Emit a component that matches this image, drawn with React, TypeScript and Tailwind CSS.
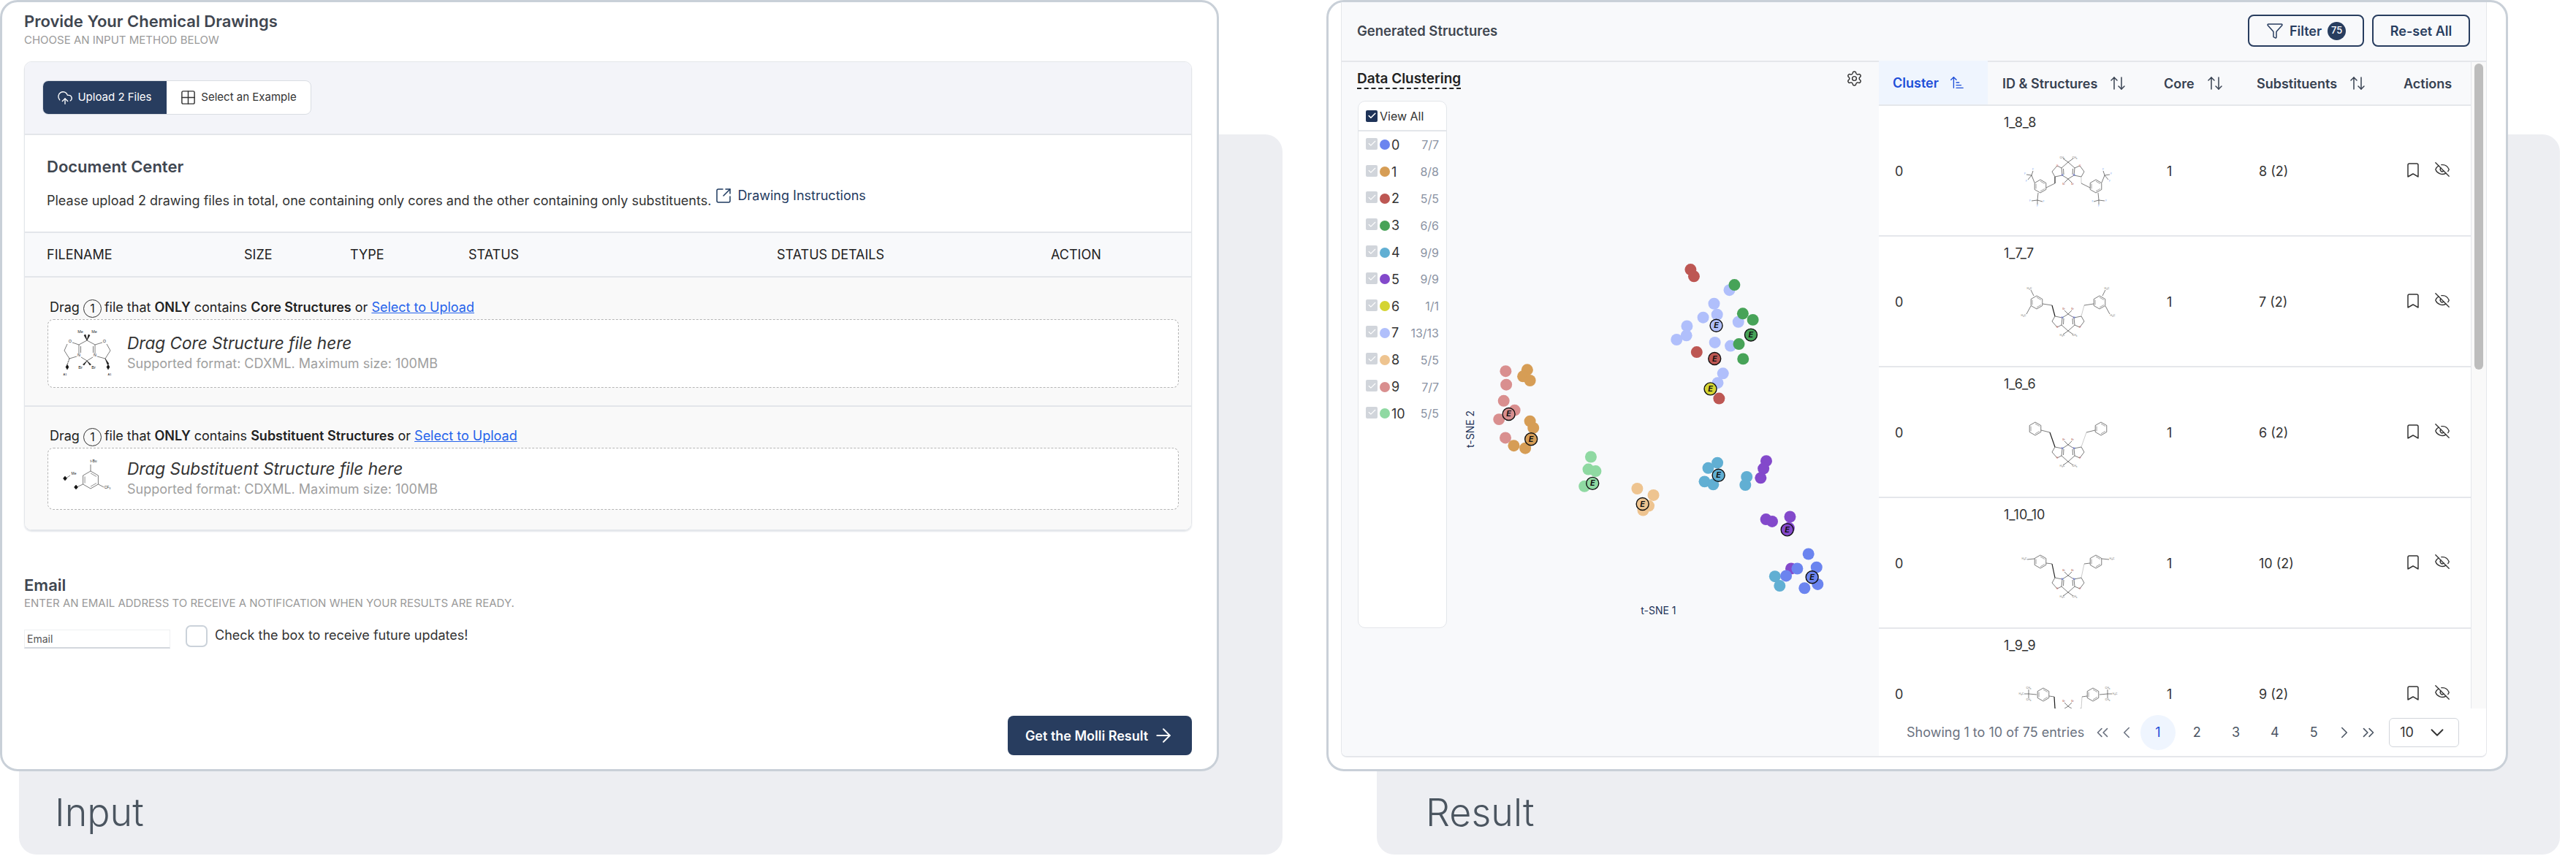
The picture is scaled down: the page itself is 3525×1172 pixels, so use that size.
import {
  ArrowRight,
  ArrowUpDown,
  ArrowUpNarrowWide,
  Bookmark,
  Check,
  ChevronDown,
  ChevronLeft,
  ChevronRight,
  ChevronsLeft,
  ChevronsRight,
  CloudUpload,
  EyeOff,
  Funnel,
  Grid2x2,
  Settings,
  SquareArrowOutUpRight,
} from 'lucide-react'

const clusters = [
  { id: 0, color: '#6b84ef', count: '7/7' },
  { id: 1, color: '#d69d55', count: '8/8' },
  { id: 2, color: '#bd5753', count: '5/5' },
  { id: 3, color: '#47a358', count: '6/6' },
  { id: 4, color: '#61afd3', count: '9/9' },
  { id: 5, color: '#8349cb', count: '9/9' },
  { id: 6, color: '#d4d432', count: '1/1' },
  { id: 7, color: '#b0bffb', count: '13/13' },
  { id: 8, color: '#eec490', count: '5/5' },
  { id: 9, color: '#d98f8f', count: '7/7' },
  { id: 10, color: '#8fd9a2', count: '5/5' },
]

// points measured off the plot, e is the "E" marker of each cluster
const points: { c: string; p: number[][]; e: number[] }[] = [
  { c: '#8349cb', p: [[1089, 873], [1079, 902], [1069, 938], [1088, 1097], [1110, 1105], [1174, 1087], [1170, 1130], [1178, 1286]], e: [1164, 1137] },
  { c: '#61afd3', p: [[914, 880], [881, 900], [868, 952], [899, 963], [1019, 934], [1014, 965], [1120, 1316], [1137, 1352]], e: [918, 928] },
  { c: '#6b84ef', p: [[1240, 1230], [1269, 1281], [1200, 1286], [1160, 1314], [1273, 1346], [1226, 1361]], e: [1253, 1319] },
  { c: '#b0bffb', p: [[957, 217], [902, 269], [913, 311], [863, 322], [805, 355], [803, 391], [768, 407], [989, 339], [905, 418], [961, 431], [934, 537], [915, 573]], e: [910, 353] },
  { c: '#47a358', p: [[975, 197], [1005, 307], [1041, 331], [991, 424], [1006, 481]], e: [1034, 389] },
  { c: '#bd5753', p: [[818, 138], [830, 164], [840, 455], [920, 633]], e: [904, 480] },
  { c: '#d4d432', p: [], e: [889, 596] },
  { c: '#d98f8f', p: [[156, 528], [158, 580], [149, 642], [188, 678], [132, 713], [155, 784]], e: [167, 693] },
  { c: '#d69d55', p: [[233, 523], [218, 548], [243, 564], [243, 720], [255, 746], [185, 814], [226, 824]], e: [247, 789] },
  { c: '#8fd9a2', p: [[461, 857], [452, 905], [478, 912], [438, 970]], e: [467, 959] },
  { c: '#eec490', p: [[627, 979], [685, 1004], [668, 1045], [648, 1062]], e: [646, 1038] },
]

const px = (x: number) => 2000 + x / 2.613 - 1835
const py = (y: number) => 320 + y / 2.8 - 85

function vertex(cx: number, cy: number, r: number, i: number) {
  const a = ((60 * i + 30) * Math.PI) / 180
  return [cx + r * Math.cos(a), cy + r * Math.sin(a)]
}

function hexagon(cx: number, cy: number, r: number) {
  return [0, 1, 2, 3, 4, 5].map((i) => vertex(cx, cy, r, i).join(',')).join(' ')
}

// three inner lines, the aromatic double bonds
function InnerBonds({ cx, cy, r }: { cx: number; cy: number; r: number }) {
  return (
    <g strokeWidth="0.5">
      {[0, 2, 4].map((i) => {
        const a = vertex(cx, cy, r * 0.76, i)
        const b = vertex(cx, cy, r * 0.76, i + 1)
        return <line key={i} x1={a[0]} y1={a[1]} x2={b[0]} y2={b[1]} />
      })}
    </g>
  )
}

type Variant = 'cf3' | 'me' | 'ph' | 'tol' | 'tbu'

function Side({ v, mirror, flip }: { v: Variant; mirror: boolean; flip: boolean }) {
  const x = (n: number) => (mirror ? 162 - n : n)
  const line = (a: number, b: number, c: number, d: number, key: string) => (
    <line key={key} x1={x(a)} y1={b} x2={x(c)} y2={d} />
  )
  const label = (t: string, a: number, b: number, fill: string, key: string) => (
    <text key={key} x={x(a)} y={b} fill={fill} stroke="none" fontSize="3.6" textAnchor="middle" dominantBaseline="middle">
      {t}
    </text>
  )
  const chY = flip ? 56 : 44
  const f = '#6ea3ef'
  const g = '#666666'
  const cfg = {
    cf3: { ring: [43, 57], ch2: [63, 53] },
    me: { ring: [38, 37], ch2: [59, 41] },
    ph: { ring: [36, 31], ch2: [56, 36] },
    tol: { ring: [43, 34], ch2: [59, 37] },
    tbu: { ring: [47, 37], ch2: [62, 40] },
  }[v]
  const [rx, ry] = cfg.ring
  const [cx, cy] = cfg.ch2
  return (
    <g>
      <polygon points={hexagon(x(rx), ry, 9)} />
      <InnerBonds cx={x(rx)} cy={ry} r={9} />
      <line x1={x(63)} y1={chY} x2={x(cx)} y2={cy} strokeWidth={mirror ? 0.5 : 1.2} stroke={mirror ? '#999999' : '#222222'} />
      {line(cx, cy, rx + 8, ry + 2, 'b')}
      {v === 'cf3' && [
        line(rx - 8, ry - 5, 31, 42, 'c'),
        line(31, 42, 33, 36, 'd'),
        line(31, 42, 24, 41, 'e'),
        line(31, 42, 26, 48, 'h'),
        line(rx - 3, ry + 9, 39, 76, 'i'),
        line(39, 76, 31, 77, 'j'),
        line(39, 76, 46, 78, 'k'),
        line(39, 76, 39, 82, 'l'),
        label('F', 33, 34, f, 'm'),
        label('F', 22, 40, f, 'n'),
        label('F', 24, 50, f, 'o'),
        label('F', 29, 77, f, 'q'),
        label('F', 47.5, 78, f, 'r'),
        label('F', 39, 84, f, 's'),
      ]}
      {v === 'me' && [
        line(rx - 4, ry - 9, 30, 20, 'c'),
        line(rx - 8, ry + 5, 24, 53, 'd'),
        label('H₃C', 28, 18, g, 'e'),
        label('H₃C', 20, 55, g, 'h'),
      ]}
      {v === 'tol' && [line(rx - 8, ry - 4, 25, 31, 'c'), label('H₃C', 21, 30, g, 'e')]}
      {v === 'tbu' && [
        line(rx - 9, ry, 27, 36, 'c'),
        line(27, 36, 27, 30, 'd'),
        line(27, 36, 21, 36, 'e'),
        line(27, 36, 27, 42, 'h'),
        label('CH₃', 27, 28, g, 'i'),
        label('H₃C', 17, 36, g, 'j'),
        label('CH₃', 27, 44, g, 'k'),
      ]}
    </g>
  )
}

function Molecule({ v, flip }: { v: Variant; flip: boolean }) {
  const y = (n: number) => (flip ? 100 - n : n)
  const bonds = [
    [81, 24, 72, 32], [72, 32, 73, 42], [73, 42, 81, 47], [81, 47, 89, 42], [89, 42, 90, 32], [90, 32, 81, 24],
    [72, 32, 66, 29], [66, 29, 59, 37], [59, 37, 63, 44], [63, 44, 73, 42],
    [90, 32, 97, 29], [97, 29, 103, 37], [103, 37, 99, 44], [99, 44, 89, 42],
    [81, 24, 74, 19], [81, 24, 88, 19], [81, 47, 76, 52], [81, 47, 86, 52],
    [74.5, 33, 75, 41], [87.5, 33, 87, 41],
  ]
  const lab = (t: string, a: number, b: number, fill: string) => (
    <text key={t + a} x={a} y={y(b)} fill={fill} stroke="none" fontSize="3.6" textAnchor="middle" dominantBaseline="middle">
      {t}
    </text>
  )
  return (
    <svg viewBox="0 0 160 100" className="w-[160px] h-[100px]" fill="none" stroke="#444444" strokeWidth="0.7">
      {bonds.map((b, i) => (
        <line key={i} x1={b[0]} y1={y(b[1])} x2={b[2]} y2={y(b[3])} />
      ))}
      <Side v={v} mirror={false} flip={flip} />
      <Side v={v} mirror={true} flip={flip} />
      {lab('O', 66, 29, '#e0605a')}
      {lab('O', 97, 29, '#e0605a')}
      {lab('N', 73, 42, '#4f63e8')}
      {lab('N', 89, 42, '#4f63e8')}
      {lab('Br', 75, 54, '#a85050')}
      {lab('Br', 87, 54, '#a85050')}
      {lab(flip ? 'H₃C' : 'CH₃', 73, 18, '#666666')}
      {lab('CH₃', 90, 18, '#666666')}
    </svg>
  )
}

function CoreDrawing() {
  const bonds = [
    [48, 27, 37, 33], [37, 33, 37, 45], [40, 50, 48, 55], [48, 55, 56, 50], [59, 45, 59, 33], [59, 33, 48, 27],
    [37, 33, 28, 30], [21, 32, 17, 41], [17, 41, 24, 52], [24, 52, 34, 49],
    [59, 33, 69, 30], [75, 32, 80, 41], [80, 41, 73, 52], [73, 52, 62, 49],
    [39.5, 35, 39.5, 44], [56.5, 35, 56.5, 44],
  ]
  return (
    <svg viewBox="0 0 100 90" className="w-[100px] h-[90px] shrink-0" fill="none" stroke="#222222" strokeWidth="0.6">
      {bonds.map((b, i) => (
        <line key={i} x1={b[0]} y1={b[1]} x2={b[2]} y2={b[3]} />
      ))}
      <polygon points="48,27 46,19 44,20" fill="#111" />
      <polygon points="48,27 50,19 52,20" fill="#111" />
      <polygon points="48,55 44,61 42.5,60" fill="#111" />
      <polygon points="48,55 52,61 53.5,60" fill="#111" />
      <line x1="24" y1="52" x2="21" y2="60" strokeDasharray="0.8 0.8" strokeWidth="1.2" />
      <polygon points="73,52 76,60 78,59" fill="#111" />
      <polygon points="21,60 23,63.5 21,67 19,63.5" fill="#111" />
      <polygon points="77,60 79,63.5 77,67 75,63.5" fill="#111" />
      <g fill="#222" stroke="none" fontSize="5.5" textAnchor="middle" dominantBaseline="middle" fontFamily="Liberation Sans, sans-serif">
        <text x="39" y="16">Me</text>
        <text x="58" y="16">Me</text>
        <text x="25" y="29">O</text>
        <text x="72" y="29">O</text>
        <text x="37" y="48">N</text>
        <text x="59" y="48">N</text>
        <text x="39" y="65">Br</text>
        <text x="57" y="65">Br</text>
        <text x="18" y="74" fontSize="4">A1</text>
        <text x="79" y="74" fontSize="4">A1</text>
      </g>
    </svg>
  )
}

function SubstituentDrawing() {
  return (
    <svg viewBox="0 0 100 85" className="w-[100px] h-[85px] shrink-0" fill="none" stroke="#222222" strokeWidth="0.6">
      <polygon points={hexagon(53, 44, 12)} />
      <InnerBonds cx={53} cy={44} r={12} />
      <line x1="53" y1="32" x2="53" y2="23" />
      <line x1="63.5" y1="50" x2="71" y2="54" />
      <line x1="42.5" y1="50" x2="34" y2="54" />
      <line x1="19" y1="42" x2="25" y2="38" />
      <polygon points="33,51 35.5,54 33,57 30.5,54" fill="#111" />
      <polygon points="18,39 20.5,42 18,45 15.5,42" fill="#111" />
      <g fill="#222" stroke="none" fontSize="5" textAnchor="middle" dominantBaseline="middle" fontFamily="Liberation Sans, sans-serif">
        <text x="57" y="19">t-Bu</text>
        <text x="30" y="36">Me</text>
        <text x="76" y="55">CF₃</text>
      </g>
    </svg>
  )
}

function OneBadge() {
  return (
    <span className="inline-flex w-[25px] h-[25px] ml-[5px] mr-[4px] items-center justify-center rounded-full border border-[#333] text-[16px] align-middle">
      1
    </span>
  )
}

function DropRow({
  kind,
  title,
  className,
  zoneClass,
  drawing,
}: {
  kind: string
  title: string
  className: string
  zoneClass: string
  drawing: React.ReactNode
}) {
  return (
    <div className={`bg-[#f9f9f9] pl-[31px] pr-[17px] ${className}`}>
      <div className="h-[24px] leading-[24px] text-[18px] text-[#222] pl-[3px] whitespace-nowrap">
        Drag
        <OneBadge />
        file that <b className="font-semibold">ONLY</b> contains <b className="font-semibold">{kind}</b> or{' '}
        <a className="text-[#2563eb] underline">Select to Upload</a>
      </div>
      <div className={`mt-[4px] bg-white border border-dashed border-[#b5b5b5] rounded-[8px] flex items-center pl-[5px] ${zoneClass}`}>
        {drawing}
        <div className="ml-[3px]">
          <div className="text-[22.6px] leading-[28px] italic text-[#333]">{title}</div>
          <div className="text-[18px] leading-[28px] text-[#a0a0a0]">Supported format: CDXML. Maximum size: 100MB</div>
        </div>
      </div>
    </div>
  )
}

function InputCard() {
  return (
    <div className="absolute left-0 top-0 w-[1668px] h-[1056px] bg-white border-[3px] border-[#c9d0d8] rounded-[24px] pl-[30px] pr-[34px] pb-[19px] flex flex-col">
      <h2 className="mt-[12px] text-[22px] leading-[28px] font-semibold text-[#3f4650]">Provide Your Chemical Drawings</h2>
      <p className="mt-[2px] text-[15px] leading-[20px] text-[#9a9a9a]">CHOOSE AN INPUT METHOD BELOW</p>

      <div className="mt-[19px] border border-[#e3e6ea] rounded-[10px] overflow-hidden shadow-[0_2px_2px_#e3e6ea]">
        <div className="h-[100px] bg-[#f3f4f9] border-b-2 border-[#e3e6ea] pt-[25px] pl-[24px]">
          <div className="flex w-[368px] h-[47px] rounded-[8px] overflow-hidden bg-white border border-[#d9dde3]">
            <div className="w-[170px] -m-px bg-[#283d5f] text-white flex items-center justify-center gap-[6px] text-[15px]">
              <CloudUpload size={22} strokeWidth={1.5} />
              Upload 2 Files
            </div>
            <div className="flex-1 flex items-center justify-center gap-[6px] text-[15px] text-[#333]">
              <Grid2x2 size={23} strokeWidth={1.5} />
              Select an Example
            </div>
          </div>
        </div>

        <div className="h-[132px] bg-white pl-[30px] pt-[29px]">
          <h3 className="text-[22px] leading-[28px] font-semibold text-[#3f4650]">Document Center</h3>
          <div className="mt-[19px] flex items-center text-[18px] leading-[28px] text-[#333]">
            Please upload 2 drawing files in total, one containing only cores and the other containing only substituents.
            <a className="ml-[5px] -mt-[14px] flex items-center gap-[7px] text-[#1e3a5f]">
              <SquareArrowOutUpRight size={24} strokeWidth={1.5} />
              Drawing Instructions
            </a>
          </div>
        </div>

        <div className="relative h-[63px] bg-[#f8f9fb] border-y-2 border-[#e3e6ea] flex items-center text-[18px] text-[#222]">
          <span className="w-[300px] pl-[30px]">FILENAME</span>
          <span className="w-[145px]">SIZE</span>
          <span className="w-[162px]">TYPE</span>
          <span className="w-[422px]">STATUS</span>
          <span className="w-[375px]">STATUS DETAILS</span>
          <span>ACTION</span>
        </div>

        <DropRow
          kind="Core Structures"
          title="Drag Core Structure file here"
          className="h-[177px] pt-[29px] border-b-2 border-[#e3e6ea]"
          zoneClass="h-[94px]"
          drawing={<CoreDrawing />}
        />
        <DropRow
          kind="Substituent Structures"
          title="Drag Substituent Structure file here"
          className="h-[168px] pt-[28px]"
          zoneClass="h-[85px]"
          drawing={<SubstituentDrawing />}
        />
      </div>

      <h3 className="mt-[61px] text-[22px] leading-[28px] font-semibold text-[#3f4650]">Email</h3>
      <p className="mt-[1px] text-[15px] leading-[20px] text-[#9a9a9a]">
        ENTER AN EMAIL ADDRESS TO RECEIVE A NOTIFICATION WHEN YOUR RESULTS ARE READY.
      </p>
      <div className="mt-[20px] flex items-start">
        <input
          placeholder="Email"
          className="mt-[6px] w-[200px] h-[26px] px-[3px] text-[14px] border border-[#eef0f2] border-b-2 border-b-[#d3d7dd] placeholder:text-[#555]"
        />
        <span className="ml-[21px] w-[30px] h-[30px] rounded-[7px] border-2 border-[#cbd2da]" />
        <span className="ml-[10px] mt-[2px] text-[18px] leading-[24px] text-[#333]">Check the box to receive future updates!</span>
      </div>

      <button className="mt-auto self-end w-[252px] h-[54px] rounded-[8px] bg-[#283d5f] text-white text-[18px] font-semibold flex items-center justify-center gap-[6px]">
        Get the Molli Result
        <ArrowRight size={30} strokeWidth={1.5} />
      </button>
    </div>
  )
}

function GrayCheck() {
  return (
    <span className="w-[16px] h-[16px] shrink-0 -mt-[3px] bg-[#d1d5db] rounded-[2px] flex items-center justify-center text-white">
      <Check size={13} strokeWidth={2} />
    </span>
  )
}

function Legend() {
  return (
    <div className="relative ml-[22px] mt-[9px] w-[122px] h-[722px] bg-white border border-[#e3e6ea] rounded-[10px] overflow-hidden">
      <div className="h-[41px] border-b-2 border-[#e3e6ea] flex items-center pl-[10px] text-[16px] text-[#333]">
        <span className="w-[16px] h-[16px] bg-[#1e3358] rounded-[2px] flex items-center justify-center text-white mr-[3px]">
          <Check size={13} strokeWidth={3} />
        </span>
        View All
      </div>
      {clusters.map((c) => (
        <div key={c.id} className="h-[36.8px] flex items-center pl-[10px] pr-[10px]">
          <GrayCheck />
          <span className="ml-[3px] w-[14px] h-[14px] rounded-full shrink-0" style={{ backgroundColor: c.color }} />
          <span className="ml-[2px] text-[18px] text-[#333]">{c.id}</span>
          <span className="ml-auto text-[16px] text-[#8b93a3]">{c.count}</span>
        </div>
      ))}
    </div>
  )
}

function ScatterPlot() {
  return (
    <svg className="absolute inset-0 w-full h-full pointer-events-none" viewBox="0 0 736 951">
      {points.map((g) =>
        g.p.map((p, i) => <circle key={g.c + i} cx={px(p[0])} cy={py(p[1])} r="8" fill={g.c} />)
      )}
      {points.map((g) => (
        <g key={g.c}>
          <circle cx={px(g.e[0])} cy={py(g.e[1])} r="8.5" fill={g.c} stroke="#111" strokeWidth="1.4" />
          <text x={px(g.e[0])} y={py(g.e[1]) + 0.5} fontSize="11" fontStyle="italic" fontWeight="700" fill="#111" textAnchor="middle" dominantBaseline="middle">
            E
          </text>
        </g>
      ))}
      <text x="434" y="753" fontSize="14" fill="#1e3358" textAnchor="middle" dominantBaseline="middle">
        t-SNE 1
      </text>
      <text x="177" y="503" fontSize="14" fill="#1e3358" textAnchor="middle" dominantBaseline="middle" transform="rotate(-90 177 503)">
        t-SNE 2
      </text>
    </svg>
  )
}

const rows: { id: string; sub: string; v: Variant; flip: boolean }[] = [
  { id: '1_8_8', sub: '8 (2)', v: 'cf3', flip: false },
  { id: '1_7_7', sub: '7 (2)', v: 'me', flip: true },
  { id: '1_6_6', sub: '6 (2)', v: 'ph', flip: true },
  { id: '1_10_10', sub: '10 (2)', v: 'tol', flip: true },
  { id: '1_9_9', sub: '9 (2)', v: 'tbu', flip: true },
]

function ResultsTable() {
  const cols = 'grid grid-cols-[149px_220px_127px_201px_113px]'
  return (
    <div className="w-[831px] flex flex-col bg-white">
      <div className="flex">
        <div className="w-[810px]">
          <div className={`${cols} h-[60px] bg-[#f8f9fb] border-b-2 border-[#e5e7eb] text-[18px] font-semibold text-[#374151]`}>
            <div className="bg-[#eff5fe] -mt-[2px] pl-[19px] flex items-center gap-[14px] text-[#1d4ed8]">
              Cluster
              <ArrowUpNarrowWide size={22} strokeWidth={1.5} />
            </div>
            <div className="pl-[20px] flex items-center gap-[16px]">
              ID & Structures
              <ArrowUpDown size={24} strokeWidth={1.5} />
            </div>
            <div className="pl-[21px] flex items-center gap-[16px]">
              Core
              <ArrowUpDown size={24} strokeWidth={1.5} />
            </div>
            <div className="pl-[21px] flex items-center gap-[16px]">
              Substituents
              <ArrowUpDown size={24} strokeWidth={1.5} />
            </div>
            <div className="pl-[21px] flex items-center">Actions</div>
          </div>
          <div className="h-[825px] overflow-hidden">
            {rows.map((r) => (
              <div key={r.id} className={`${cols} h-[179px] border-b-2 border-[#e5e7eb] text-[18px] text-[#333]`}>
                <div className="pl-[22px] pt-[78px] leading-[24px]">0</div>
                <div className="pl-[22px] pt-[11px]">
                  <div className="leading-[24px]">{r.id}</div>
                  <div className="mt-[18px] ml-[7px]">
                    <Molecule v={r.v} flip={r.flip} />
                  </div>
                </div>
                <div className="pl-[25px] pt-[78px] leading-[24px]">1</div>
                <div className="pl-[24px] pt-[78px] leading-[24px]">{r.sub}</div>
                <div className="pl-[22px] pt-[76px] flex items-start gap-[17px]">
                  <Bookmark size={24} strokeWidth={1.5} />
                  <EyeOff size={22} strokeWidth={1.5} />
                </div>
              </div>
            ))}
          </div>
        </div>
        <div className="w-[21px] bg-[#f9f9f9] border-l border-[#e5e7eb] pt-[2px] pl-[4px]">
          <div className="w-[12px] h-[419px] rounded-full bg-[#bdbdbd]" />
        </div>
      </div>
      <div className="h-[66px] flex items-center pl-[38px] text-[#4b5563]">
        <span className="w-[238px] whitespace-nowrap text-[18px] text-[#6b7280]">Showing 1 to 10 of 75 entries</span>
        <ChevronsLeft className="ml-[17px] text-[#6b7280]" size={26} strokeWidth={1.5} />
        <ChevronLeft className="ml-[7px] text-[#6b7280]" size={26} strokeWidth={1.5} />
        <div className="ml-[6px] flex gap-[5.3px] text-[18px]">
          <span className="w-[48px] h-[48px] rounded-full bg-[#eff5fe] text-[#1d4ed8] flex items-center justify-center">1</span>
          {[2, 3, 4, 5].map((n) => (
            <span key={n} className="w-[48px] h-[48px] flex items-center justify-center">
              {n}
            </span>
          ))}
        </div>
        <ChevronRight className="ml-[5px]" size={26} strokeWidth={1.5} />
        <ChevronsRight className="ml-[7px]" size={26} strokeWidth={1.5} />
        <div className="ml-[15px] w-[96px] h-[40px] border border-[#d1d5db] rounded-[6px] flex items-center pl-[14px] pr-[14px] justify-between text-[18px] text-[#333]">
          10
          <ChevronDown size={30} strokeWidth={1.5} />
        </div>
      </div>
    </div>
  )
}

function ResultCard() {
  return (
    <div className="absolute left-0 top-0 w-[1617px] h-[1056px] bg-white border-[3px] border-[#c9d0d8] rounded-[24px] pl-[17px] pr-[26px] pb-[16px]">
      <div className="h-full border-x border-b-2 border-[#e5e7eb] rounded-b-[8px] overflow-hidden flex flex-col">
        <div className="h-[82px] shrink-0 bg-[#f8f9fb] border-b-2 border-[#e5e7eb] flex items-center pl-[21px] pr-[22px]">
          <h2 className="text-[18.5px] font-semibold text-[#3f4650]">Generated Structures</h2>
          <button className="ml-auto w-[159px] h-[44px] -mt-[2px] rounded-[8px] border-2 border-[#283d5f] text-[18px] font-semibold text-[#283d5f] flex items-center justify-center gap-[8px]">
            <Funnel size={24} strokeWidth={1.5} />
            Filter
            <span className="w-[25px] h-[25px] rounded-full bg-[#283d5f] text-white text-[13px] font-medium flex items-center justify-center">75</span>
          </button>
          <button className="ml-[11px] w-[134px] h-[44px] -mt-[2px] rounded-[8px] border-2 border-[#283d5f] text-[18px] font-semibold text-[#283d5f]">
            Re-set All
          </button>
        </div>
        <div className="flex-1 flex min-h-0">
          <div className="relative w-[736px] bg-[#f8f9fb]">
            <div className="h-[44px] pt-[11px] pl-[21px] pr-[22px] flex items-start justify-between">
              <span className="text-[19px] leading-[24px] font-semibold text-[#222] border-b-2 border-dashed border-[#222]">Data Clustering</span>
              <Settings size={23} strokeWidth={1.5} className="text-[#333]" />
            </div>
            <Legend />
            <ScatterPlot />
          </div>
          <ResultsTable />
        </div>
      </div>
    </div>
  )
}

function Panel({ label, className }: { label: string; className: string }) {
  return (
    <div className={`mt-[184px] h-[986px] bg-[#edeef2] rounded-[24px] flex items-end pb-[27px] ${className}`}>
      <span className="text-[52px] leading-[60px] font-light text-[#4b5560]">{label}</span>
    </div>
  )
}

export default function App() {
  return (
    <div className="w-[3525px] h-[1172px] overflow-hidden bg-white flex font-['Inter',sans-serif]">
      <section className="relative w-[1755px] shrink-0">
        <Panel label="Input" className="ml-[26px] pl-[49px]" />
        <InputCard />
      </section>
      <section className="relative w-[1688px] shrink-0 ml-[60px]">
        <Panel label="Result" className="ml-[69px] pl-[67px]" />
        <ResultCard />
      </section>
    </div>
  )
}
